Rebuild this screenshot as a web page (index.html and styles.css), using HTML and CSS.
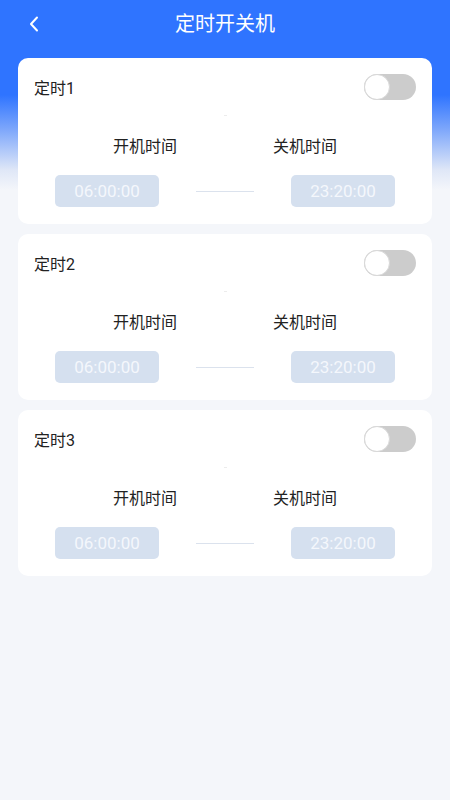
FILE: index.html
```html
<!DOCTYPE html>
<html lang="zh-CN">
<head>
    <meta charset="UTF-8">
    <meta name="viewport" content="width=device-width, initial-scale=1.0">
    <title>定时开关机</title>
    <link rel="stylesheet" href="styles.css">
</head>
<body>

    <div class="header">
        <span class="back">
            <svg width="10" height="16" viewBox="0 0 10 16"><path d="M8 1.5 L2 8 L8 14.5" fill="none" stroke="#fff" stroke-width="2" stroke-linecap="round" stroke-linejoin="round"/></svg>
        </span>
        <h1>定时开关机</h1>
    </div>

    <div class="list">
        <div class="card">
            <div class="card-top">
                <span class="card-title">定时1</span>
                <span class="switch"><span class="knob"></span></span>
            </div>
            <div class="dot"></div>
            <div class="labels">
                <span>开机时间</span>
                <span>关机时间</span>
            </div>
            <div class="times">
                <span class="time">06:00:00</span>
                <span class="line"></span>
                <span class="time">23:20:00</span>
            </div>
        </div>

        <div class="card">
            <div class="card-top">
                <span class="card-title">定时2</span>
                <span class="switch"><span class="knob"></span></span>
            </div>
            <div class="dot"></div>
            <div class="labels">
                <span>开机时间</span>
                <span>关机时间</span>
            </div>
            <div class="times">
                <span class="time">06:00:00</span>
                <span class="line"></span>
                <span class="time">23:20:00</span>
            </div>
        </div>

        <div class="card">
            <div class="card-top">
                <span class="card-title">定时3</span>
                <span class="switch"><span class="knob"></span></span>
            </div>
            <div class="dot"></div>
            <div class="labels">
                <span>开机时间</span>
                <span>关机时间</span>
            </div>
            <div class="times">
                <span class="time">06:00:00</span>
                <span class="line"></span>
                <span class="time">23:20:00</span>
            </div>
        </div>
    </div>

</body>
</html>
```

FILE: styles.css
```css
/* page */
body {
    margin: 0;
    padding: 0;
    font-family: Roboto, "Noto Sans CJK SC", sans-serif;
    background: linear-gradient(to bottom, #2f74ff 0px, #2f74ff 95px, #7fa8fb 130px, #dfe7f7 170px, #f4f6fa 190px, #f4f6fa 100%);
    min-height: 800px;
    color: #222;
}

/* top bar */
.header {
    height: 48px;
    display: flex;
    align-items: center;
    justify-content: center;
    position: relative;
}

.header h1 {
    margin: 0;
    font-size: 20px;
    font-weight: 400;
    color: white;
    line-height: 28px;
}

.back {
    position: absolute;
    left: 29px;
    top: 16px;
    display: flex;
}

/* cards */
.list {
    padding: 10px 18px 0;
}

.card {
    background: #fff;
    border-radius: 10px;
    height: 166px;
    box-sizing: border-box;
    padding: 16px 16px 0;
    margin-bottom: 10px;
}

.card-top {
    display: flex;
    align-items: center;
    justify-content: space-between;
    height: 26px;
}

.card-title {
    font-size: 16px;
    color: #222;
}

.switch {
    width: 52px;
    height: 26px;
    border-radius: 13px;
    background-color: #cccccc;
    display: flex;
    align-items: center;
}

.knob {
    width: 24px;
    height: 24px;
    border-radius: 50%;
    background: #fff;
    border: 1px solid #d8d8d8;
}

.dot {
    width: 3px;
    height: 1px;
    background: #ececec;
    margin: 15px auto 0;
}

.labels {
    display: flex;
    justify-content: center;
    gap: 96px;
    margin-top: 20px;
    font-size: 16px;
    line-height: 22px;
    color: #222;
}

.times {
    display: flex;
    justify-content: center;
    align-items: center;
    gap: 37px;
    margin-top: 17px;
}

.time {
    width: 104px;
    height: 32px;
    line-height: 32px;
    border-radius: 5px;
    background-color: #d5e0ef;
    color: #f4f7fc;
    font-size: 17px;
    text-align: center;
}

.line {
    width: 58px;
    height: 1px;
    background-color: #dbe2ed;
}
```
